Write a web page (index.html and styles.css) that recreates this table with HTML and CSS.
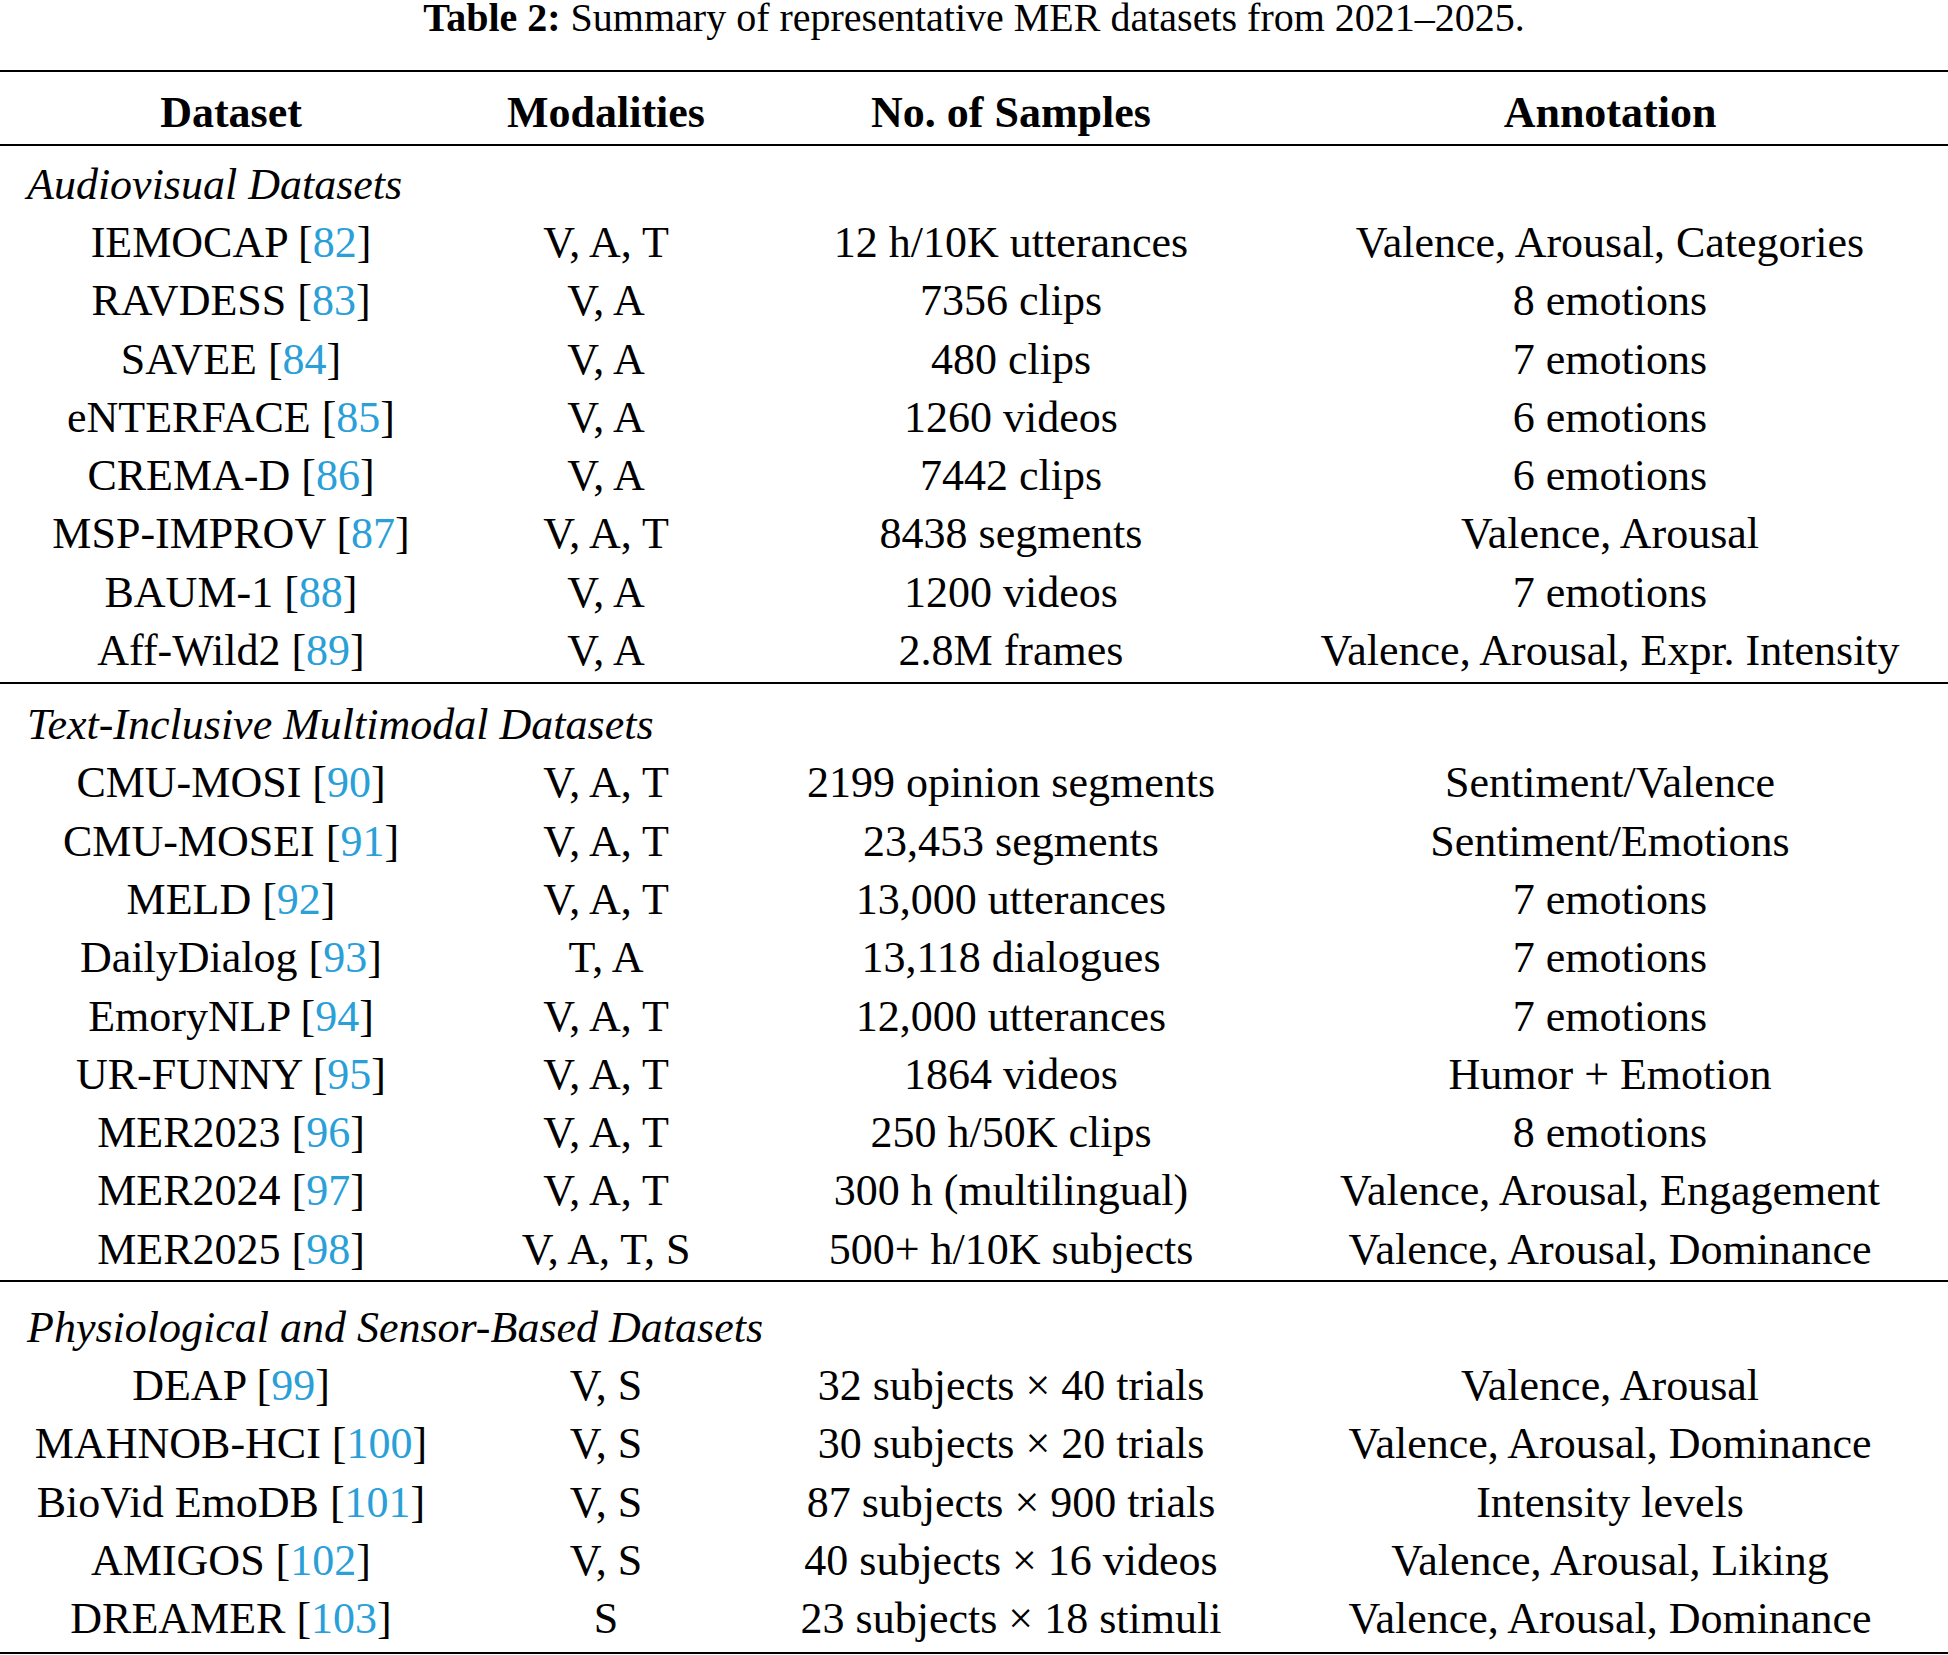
FILE: index.html
```html
<!DOCTYPE html>
<html lang="en">
<head>
<meta charset="utf-8">
<title>Table 2: Summary of representative MER datasets from 2021–2025.</title>
<link rel="stylesheet" href="styles.css">
</head>
<body>
<table class="mer">
  <caption class="cap"><b>Table 2:</b> Summary of representative MER datasets from 2021–2025.</caption>
  <colgroup>
    <col class="c1"><col class="c2"><col class="c3"><col class="c4">
  </colgroup>
  <thead>
    <tr><th>Dataset</th><th>Modalities</th><th>No. of Samples</th><th>Annotation</th></tr>
  </thead>
  <tbody class="grp g1">
    <tr class="sec"><td colspan="4">Audiovisual Datasets</td></tr>
    <tr><td>IEMOCAP [<a>82</a>]</td><td>V, A, T</td><td>12 h/10K utterances</td><td>Valence, Arousal, Categories</td></tr>
    <tr><td>RAVDESS [<a>83</a>]</td><td>V, A</td><td>7356 clips</td><td>8 emotions</td></tr>
    <tr><td>SAVEE [<a>84</a>]</td><td>V, A</td><td>480 clips</td><td>7 emotions</td></tr>
    <tr><td>eNTERFACE [<a>85</a>]</td><td>V, A</td><td>1260 videos</td><td>6 emotions</td></tr>
    <tr><td>CREMA-D [<a>86</a>]</td><td>V, A</td><td>7442 clips</td><td>6 emotions</td></tr>
    <tr><td>MSP-IMPROV [<a>87</a>]</td><td>V, A, T</td><td>8438 segments</td><td>Valence, Arousal</td></tr>
    <tr><td>BAUM-1 [<a>88</a>]</td><td>V, A</td><td>1200 videos</td><td>7 emotions</td></tr>
    <tr class="last"><td>Aff-Wild2 [<a>89</a>]</td><td>V, A</td><td>2.8M frames</td><td>Valence, Arousal, Expr. Intensity</td></tr>
  </tbody>
  <tbody class="grp g2">
    <tr class="sec"><td colspan="4">Text-Inclusive Multimodal Datasets</td></tr>
    <tr><td>CMU-MOSI [<a>90</a>]</td><td>V, A, T</td><td>2199 opinion segments</td><td>Sentiment/Valence</td></tr>
    <tr><td>CMU-MOSEI [<a>91</a>]</td><td>V, A, T</td><td>23,453 segments</td><td>Sentiment/Emotions</td></tr>
    <tr><td>MELD [<a>92</a>]</td><td>V, A, T</td><td>13,000 utterances</td><td>7 emotions</td></tr>
    <tr><td>DailyDialog [<a>93</a>]</td><td>T, A</td><td>13,118 dialogues</td><td>7 emotions</td></tr>
    <tr><td>EmoryNLP [<a>94</a>]</td><td>V, A, T</td><td>12,000 utterances</td><td>7 emotions</td></tr>
    <tr><td>UR-FUNNY [<a>95</a>]</td><td>V, A, T</td><td>1864 videos</td><td>Humor + Emotion</td></tr>
    <tr><td>MER2023 [<a>96</a>]</td><td>V, A, T</td><td>250 h/50K clips</td><td>8 emotions</td></tr>
    <tr><td>MER2024 [<a>97</a>]</td><td>V, A, T</td><td>300 h (multilingual)</td><td>Valence, Arousal, Engagement</td></tr>
    <tr class="last"><td>MER2025 [<a>98</a>]</td><td>V, A, T, S</td><td>500+ h/10K subjects</td><td>Valence, Arousal, Dominance</td></tr>
  </tbody>
  <tbody class="grp g3">
    <tr class="sec"><td colspan="4">Physiological and Sensor-Based Datasets</td></tr>
    <tr><td>DEAP [<a>99</a>]</td><td>V, S</td><td>32 subjects × 40 trials</td><td>Valence, Arousal</td></tr>
    <tr><td>MAHNOB-HCI [<a>100</a>]</td><td>V, S</td><td>30 subjects × 20 trials</td><td>Valence, Arousal, Dominance</td></tr>
    <tr><td>BioVid EmoDB [<a>101</a>]</td><td>V, S</td><td>87 subjects × 900 trials</td><td>Intensity levels</td></tr>
    <tr><td>AMIGOS [<a>102</a>]</td><td>V, S</td><td>40 subjects × 16 videos</td><td>Valence, Arousal, Liking</td></tr>
    <tr class="last"><td>DREAMER [<a>103</a>]</td><td>S</td><td>23 subjects × 18 stimuli</td><td>Valence, Arousal, Dominance</td></tr>
  </tbody>
</table>
</body>
</html>
```

FILE: styles.css
```css
html, body {
  margin: 0;
  padding: 0;
  background: #fff;
}

body {
  font-family: "Liberation Serif", "Times New Roman", serif;
  color: #000;
}

.mer {
  width: 1948px;
  border-collapse: separate;
  border-spacing: 0;
  table-layout: fixed;
}

.cap {
  caption-side: top;
  font-size: 40px;
  line-height: 36px;
  padding-bottom: 34px;
  text-align: center;
  white-space: nowrap;
}

.cap b {
  font-weight: bold;
}

.c1 { width: 462px; }
.c2 { width: 288px; }
.c3 { width: 522px; }
.c4 { width: 676px; }

.mer th,
.mer td {
  padding: 0;
  font-size: 44px;
  line-height: 58.3px;
  text-align: center;
  white-space: nowrap;
  vertical-align: middle;
}

.mer thead th {
  font-weight: bold;
  line-height: 58px;
  padding-top: 12px;
  padding-bottom: 2px;
  border-top: 2px solid #000;
  border-bottom: 2px solid #000;
}

.mer .sec td {
  text-align: left;
  font-style: italic;
  padding-left: 27px;
  line-height: 58px;
}

.g1 .sec td { padding-top: 10px; }
.g2 .sec td { padding-top: 12px; border-top: 2px solid #000; }
.g3 .sec td { padding-top: 17px; border-top: 2px solid #000; }

.g1 .last td { padding-bottom: 2px; }
.g2 .last td { padding-bottom: 1px; }
.g3 .last td { padding-bottom: 3px; border-bottom: 2px solid #000; }

.mer a {
  color: #2a9fd8;
  text-decoration: none;
}
```
